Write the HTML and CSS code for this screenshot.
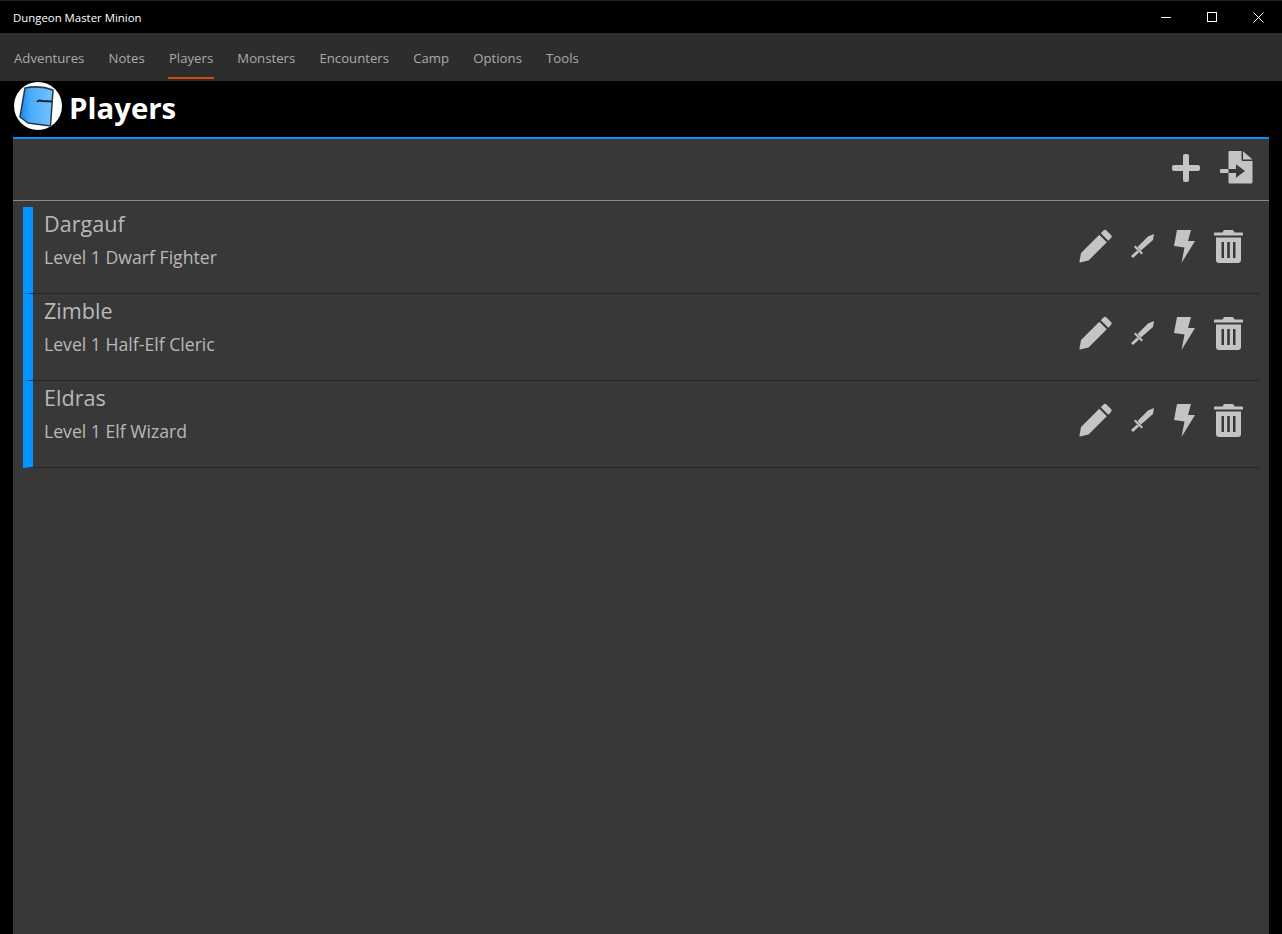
FILE: index.html
```html
<!DOCTYPE html>
<html lang="en">
<head>
<meta charset="utf-8">
<title>Dungeon Master Minion</title>
<link rel="stylesheet" href="styles.css">
</head>
<body>
<div class="window">
  <div class="titlebar">
    <span class="app-title">Dungeon Master Minion</span>
    <div class="caption">
      <span class="cap-btn"><svg width="11" height="11" viewBox="0 0 11 11"><path d="M0 5.500H10" stroke="#fff" fill="none"/></svg></span>
      <span class="cap-btn"><svg width="11" height="11" viewBox="0 0 11 11"><rect x="0.500" y="0.500" width="9" height="9" stroke="#fff" fill="none"/></svg></span>
      <span class="cap-btn"><svg width="11" height="11" viewBox="0 0 11 11"><path d="M0.500 0.500L10.500 10.500M10.500 0.500L0.500 10.500" stroke="#fff" fill="none"/></svg></span>
    </div>
  </div>
  <nav class="tabs">
    <span class="tab">Adventures</span>
    <span class="tab">Notes</span>
    <span class="tab active">Players</span>
    <span class="tab">Monsters</span>
    <span class="tab">Encounters</span>
    <span class="tab">Camp</span>
    <span class="tab">Options</span>
    <span class="tab">Tools</span>
  </nav>
  <header class="page-head">
    <svg class="logo" width="48" height="48" viewBox="0 0 48 48">
      <defs>
        <linearGradient id="helm" x1="0" y1="0" x2="1" y2="0">
          <stop offset="0" stop-color="#1186ee"/>
          <stop offset="0.3" stop-color="#4aaafa"/>
          <stop offset="1" stop-color="#74c4ff"/>
        </linearGradient>
      </defs>
      <circle cx="24" cy="24" r="24" fill="#fff"/>
      <path d="M11 6Q26 3 39 8L36.500 44L14 41L6 35Z" fill="url(#helm)" stroke="#24384c" stroke-width="1.500" stroke-linejoin="round"/>
      <path d="M23 20Q25 17.500 28 19L38 19.500" fill="none" stroke="#14232f" stroke-width="2"/>
    </svg>
    <h1 class="page-title">Players</h1>
  </header>
  <main class="panel">
    <div class="toolbar">
      <svg class="icon" width="28" height="28" viewBox="0 0 28 28"><path class="glyph" d="M11 2.200Q11 0 13 0h2q2 0 2 2.200V11h8.800q2.200 0 2.200 2v2q0 2-2.200 2H17v8.800q0 2.200-2 2.200h-2q-2 0-2-2.200V17H2.200Q0 17 0 15v-2q0-2 2.200-2H11Z"/></svg>
      <svg class="icon" width="33" height="33" viewBox="0 0 33 33"><path class="glyph" d="M8.500 1Q8.500 0 9.500 0H21.500V8.500Q21.500 10 23 10H32.500V31Q32.500 32.500 31 32.500H9.500Q8.500 32.500 8.500 31.500V22H16V26.700L25 20 16 13.300V18H8.500ZM23 0.200 32.500 8.500H23ZM1 18H8.500V22H1Q0 22 0 21V19Q0 18 1 18Z"/></svg>
    </div>
    <ul class="list">
      <li class="row">
        <div class="info"><div class="name">Dargauf</div><div class="desc">Level 1 Dwarf Fighter</div></div>
        <div class="actions">
          <svg class="icon" width="34" height="34" viewBox="0 0 34 34"><path class="glyph" d="M24.500 1.500Q26 0 27.500 1.500L32 6Q33.500 7.500 32 9L29.300 11.700 21.800 4.200ZM20.300 5.700 27.800 13.200 9.500 31.500 1 33.500Q0 33.500 0.500 32.500L2 24Z"/></svg>
          <svg class="icon sword" width="24" height="25" viewBox="0 0 24 25"><path class="glyph" d="M23 0 22 6 10 16.500 6.500 13 17 2.500ZM3 13 4.500 11.500 12 19 10.500 20.500ZM6 16.500 8 18.500 2 24 0 22Z"/></svg>
          <svg class="icon" width="22" height="33" viewBox="0 0 22 33"><path class="glyph" d="M3 0H17L14 11H21L7.500 33L10.500 17.500L0 16Z"/></svg>
          <svg class="icon" width="29" height="33" viewBox="0 0 29 33"><path class="glyph" fill-rule="evenodd" d="M10 0H19L20.500 2.500H28Q29 2.500 29 3.500V5.500H0V3.500Q0 2.500 1 2.500H8.500ZM2 7.500H27V30Q27 33 24 33H5Q2 33 2 30ZM7.500 12V28H10V12ZM13.200 12V28H15.800V12ZM19 12V28H21.500V12Z"/></svg>
        </div>
      </li>
      <li class="row">
        <div class="info"><div class="name">Zimble</div><div class="desc">Level 1 Half-Elf Cleric</div></div>
        <div class="actions">
          <svg class="icon" width="34" height="34" viewBox="0 0 34 34"><path class="glyph" d="M24.500 1.500Q26 0 27.500 1.500L32 6Q33.500 7.500 32 9L29.300 11.700 21.800 4.200ZM20.300 5.700 27.800 13.200 9.500 31.500 1 33.500Q0 33.500 0.500 32.500L2 24Z"/></svg>
          <svg class="icon sword" width="24" height="25" viewBox="0 0 24 25"><path class="glyph" d="M23 0 22 6 10 16.500 6.500 13 17 2.500ZM3 13 4.500 11.500 12 19 10.500 20.500ZM6 16.500 8 18.500 2 24 0 22Z"/></svg>
          <svg class="icon" width="22" height="33" viewBox="0 0 22 33"><path class="glyph" d="M3 0H17L14 11H21L7.500 33L10.500 17.500L0 16Z"/></svg>
          <svg class="icon" width="29" height="33" viewBox="0 0 29 33"><path class="glyph" fill-rule="evenodd" d="M10 0H19L20.500 2.500H28Q29 2.500 29 3.500V5.500H0V3.500Q0 2.500 1 2.500H8.500ZM2 7.500H27V30Q27 33 24 33H5Q2 33 2 30ZM7.500 12V28H10V12ZM13.200 12V28H15.800V12ZM19 12V28H21.500V12Z"/></svg>
        </div>
      </li>
      <li class="row">
        <div class="info"><div class="name">Eldras</div><div class="desc">Level 1 Elf Wizard</div></div>
        <div class="actions">
          <svg class="icon" width="34" height="34" viewBox="0 0 34 34"><path class="glyph" d="M24.500 1.500Q26 0 27.500 1.500L32 6Q33.500 7.500 32 9L29.300 11.700 21.800 4.200ZM20.300 5.700 27.800 13.200 9.500 31.500 1 33.500Q0 33.500 0.500 32.500L2 24Z"/></svg>
          <svg class="icon sword" width="24" height="25" viewBox="0 0 24 25"><path class="glyph" d="M23 0 22 6 10 16.500 6.500 13 17 2.500ZM3 13 4.500 11.500 12 19 10.500 20.500ZM6 16.500 8 18.500 2 24 0 22Z"/></svg>
          <svg class="icon" width="22" height="33" viewBox="0 0 22 33"><path class="glyph" d="M3 0H17L14 11H21L7.500 33L10.500 17.500L0 16Z"/></svg>
          <svg class="icon" width="29" height="33" viewBox="0 0 29 33"><path class="glyph" fill-rule="evenodd" d="M10 0H19L20.500 2.500H28Q29 2.500 29 3.500V5.500H0V3.500Q0 2.500 1 2.500H8.500ZM2 7.500H27V30Q27 33 24 33H5Q2 33 2 30ZM7.500 12V28H10V12ZM13.200 12V28H15.800V12ZM19 12V28H21.500V12Z"/></svg>
        </div>
      </li>
    </ul>
  </main>
</div>
</body>
</html>
```
FILE: styles.css
```css
* { box-sizing: border-box; }
html, body { margin: 0; height: 100%; background: #000; overflow: hidden; }
body { font-family: "Open Sans", "Noto Sans", sans-serif; }
.window { height: 934px; display: flex; flex-direction: column; border-top: 1px solid #222; }
.titlebar { height: 32px; flex: none; background: #000; display: flex; align-items: center; justify-content: space-between; padding: 0 1px 0 13px; }
.app-title { color: #fff; font-size: 11.400px; }
.caption { display: flex; }
.cap-btn { width: 46px; height: 32px; display: flex; align-items: center; justify-content: center; }
.tabs { height: 48px; flex: none; background: #2d2d2d; display: flex; padding-left: 13px; gap: 22.150px; }
.tab { height: 46px; line-height: 50px; color: #aaa; font-size: 13.200px; padding: 0 1px; border-bottom: 2px solid transparent; }
.tab.active { border-bottom-color: #ca5010; }
.page-head { height: 56px; flex: none; display: flex; align-items: flex-start; margin-left: 14px; gap: 7px; padding-top: 1px; }
.logo { flex: none; }
.page-title { margin: 0; color: #fff; font-size: 29.400px; font-weight: 700; line-height: 52px; }
.panel { flex: 1; margin: 0 13px; background: #383838; border-top: 2px solid #0a8ef0; min-height: 0; }
.toolbar { height: 62px; border-bottom: 1px solid #8a8a8a; display: flex; align-items: center; justify-content: flex-end; gap: 20px; padding: 0 16px 4px 0; }
.list { list-style: none; margin: 0; padding: 6px 9px 0 10px; }
.row { height: 87px; display: flex; justify-content: space-between; align-items: center; border-left: 10px solid #0095ff; border-bottom: 1px solid #272727; padding: 0 17px 8px 11px; }
.info { align-self: flex-start; }
.name { color: #b8b8b8; font-size: 21.600px; line-height: 30px; padding-top: 2px; }
.desc { color: #b8b8b8; font-size: 17.650px; line-height: 24px; margin-top: 6px; }
.actions { display: flex; align-items: center; gap: 18px; }
.icon { display: block; flex: none; }
.sword { margin-right: 1px; }
.glyph { fill: #c4c4c4; }
```
